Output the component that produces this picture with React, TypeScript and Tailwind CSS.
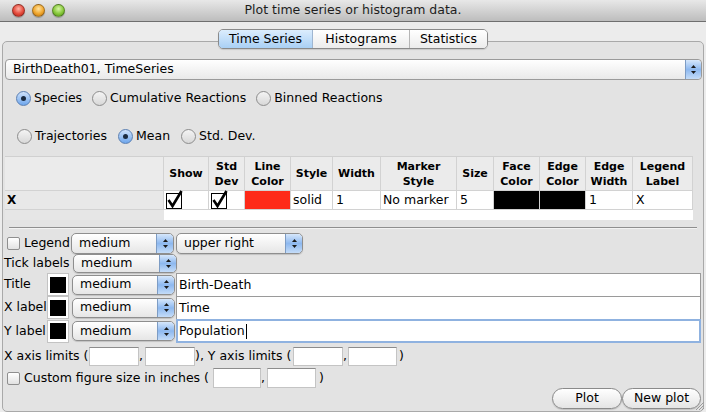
import React from "react";

const cols = [
  { h: "", w: 159 },
  { h: "Show", w: 45 },
  { h: "Std\nDev", w: 36 },
  { h: "Line\nColor", w: 46 },
  { h: "Style", w: 42 },
  { h: "Width", w: 48 },
  { h: "Marker\nStyle", w: 76 },
  { h: "Size", w: 37 },
  { h: "Face\nColor", w: 46 },
  { h: "Edge\nColor", w: 46 },
  { h: "Edge\nWidth", w: 47 },
  { h: "Legend\nLabel", w: 60 },
];

function Stepper({ w = 17 }: { w?: number }) {
  return (
    <div
      className="flex h-full items-center justify-center rounded-r-[4px] border-l border-[#7d9cc4] bg-linear-to-b from-[#d6e7fb] via-[#8db8ef] to-[#c4dcf8]"
      style={{ width: w }}
    >
      <svg width="7" height="11" viewBox="0 0 7 11">
        <path d="M3.5 1 L6 4 L1 4 Z" fill="#1a1a1a" />
        <path d="M3.5 10 L6 7 L1 7 Z" fill="#1a1a1a" />
      </svg>
    </div>
  );
}

function Popup({ label, w, h = 20 }: { label: string; w: number; h?: number }) {
  return (
    <div
      className="flex items-center overflow-hidden rounded-[5px] border border-[#8e8e8e] bg-linear-to-b from-white to-[#e6e6e6] shadow-[0_1px_1px_rgba(0,0,0,0.15)]"
      style={{ width: w, height: h }}
    >
      <span className="flex-1 pl-[7px] text-[12.5px] text-black">{label}</span>
      <Stepper />
    </div>
  );
}

function Radio({ on, label }: { on?: boolean; label: string }) {
  return (
    <div className="flex items-center gap-[3px]">
      <div
        className={
          on
            ? "flex h-[15px] w-[15px] items-center justify-center rounded-full border border-[#5a7fb3] bg-linear-to-b from-[#cfe2fa] to-[#6ea6ec]"
            : "h-[15px] w-[15px] rounded-full border border-[#8d8d8d] bg-linear-to-b from-[#f4f4f4] to-[#d8d8d8]"
        }
      >
        {on && <div className="h-[5px] w-[5px] rounded-full bg-[#1b2b40]" />}
      </div>
      <span className="text-[12.5px]">{label}</span>
    </div>
  );
}

function Check() {
  return (
    <svg width="17" height="17" viewBox="0 0 17 17" className="overflow-visible">
      <rect x="0.5" y="1.5" width="15" height="15" fill="white" stroke="black" />
      <path d="M2.5 8 L6.5 14 L15.5 -1" fill="none" stroke="black" strokeWidth="2.6" />
    </svg>
  );
}

function Box() {
  return (
    <div className="h-[13px] w-[13px] rounded-[2px] border border-[#8f8f8f] bg-linear-to-b from-white to-[#e2e2e2]" />
  );
}

function Swatch() {
  return (
    <div className="flex h-[23px] w-[22px] items-center justify-center border border-[#c3c3c3] bg-white">
      <div className="h-[16px] w-[16px] bg-black" />
    </div>
  );
}

function Field({ w, h = 19 }: { w: number; h?: number }) {
  return (
    <div
      className="border border-[#c4c4c4] border-t-[#8c8c8c] bg-white"
      style={{ width: w, height: h }}
    />
  );
}

function Light({ c }: { c: string }) {
  return (
    <div
      className="h-[13px] w-[13px] rounded-full border border-black/30 shadow-[0_1px_1px_rgba(0,0,0,0.25)]"
      style={{ background: c }}
    />
  );
}

export default function App() {
  return (
    <div className="relative h-[412px] w-[706px] overflow-hidden bg-[#ececec] font-['DejaVu_Sans',sans-serif] text-black">
      {/* title bar */}
      <div className="relative flex h-[22px] items-center justify-center border-b border-[#6f6f6f] bg-linear-to-b from-[#e8e8e8] to-[#bdbdbd]">
        <div className="absolute left-[12px] top-[4px] flex gap-[7px]">
          <Light c="radial-gradient(circle at 50% 35%, #ffb2a6, #e54a3c 55%, #a82419)" />
          <Light c="radial-gradient(circle at 50% 35%, #ffe3a0, #f0a62c 55%, #b06a0f)" />
          <Light c="radial-gradient(circle at 50% 35%, #d7f5a6, #86c83a 55%, #4d8a17)" />
        </div>
        <span className="text-[12.5px] text-[#1d1d1d]">Plot time series or histogram data.</span>
      </div>

      {/* tabs */}
      <div className="relative z-10 mt-[7px] flex h-[20px] justify-center">
        <div className="flex overflow-hidden rounded-[5px] border border-[#8a8a8a] text-[12.5px] shadow-[0_1px_1px_rgba(0,0,0,0.12)]">
          <div className="flex w-[94px] items-center justify-center border-r border-[#9fb6d1] bg-linear-to-b from-[#dcedfd] to-[#a9d0f5]">
            Time Series
          </div>
          <div className="flex w-[97px] items-center justify-center border-r border-[#b5b5b5] bg-linear-to-b from-white to-[#ececec]">
            Histograms
          </div>
          <div className="flex w-[77px] items-center justify-center bg-linear-to-b from-white to-[#ececec]">
            Statistics
          </div>
        </div>
      </div>

      {/* pane */}
      <div className="mx-[2px] -mt-[8px] h-[371px] rounded-[5px] border border-[#a9a9a9] bg-[#e3e3e3] pl-px pr-px">
        <div className="mt-[17px] flex h-[21px] items-center overflow-hidden rounded-[4px] border border-[#9a9a9a] bg-linear-to-b from-white to-[#e9e9e9] ml-px">
          <span className="flex-1 pl-[7px] text-[12.5px]">BirthDeath01, TimeSeries</span>
          <Stepper w={16} />
        </div>

        <div className="mt-[8px] flex h-[20px] items-center gap-[10px] pl-[12px]">
          <Radio on label="Species" />
          <Radio label="Cumulative Reactions" />
          <Radio label="Binned Reactions" />
        </div>
        <div className="mt-[18px] flex h-[20px] items-center gap-[11px] pl-[13px]">
          <Radio label="Trajectories" />
          <Radio on label="Mean" />
          <Radio label="Std. Dev." />
        </div>

        {/* table */}
        <div className="ml-px mt-[10px] w-[688px] border-t border-[#d0d0d0]">
          <div className="flex h-[34px] bg-[#ebebeb]">
            {cols.map((c, i) => (
              <div
                key={i}
                className="flex items-center justify-center whitespace-pre border-b border-r border-[#d2d2d2] text-center text-[11px] font-bold leading-[15px]"
                style={{ width: c.w }}
              >
                {c.h}
              </div>
            ))}
          </div>
          <div className="flex h-[19px] text-[12.5px]">
            <div className="flex w-[159px] items-center border-b border-r border-[#d2d2d2] bg-[#e8e8e8] pl-[2px] text-[12px] font-bold">
              X
            </div>
            <div className="flex w-[45px] items-center border-b border-r border-[#d2d2d2] bg-white pl-[2px]">
              <Check />
            </div>
            <div className="flex w-[36px] items-center border-b border-r border-[#d2d2d2] bg-white pl-[2px]">
              <Check />
            </div>
            <div className="w-[46px] border-b border-r border-[#d2d2d2] bg-[#fe2a19]" />
            <div className="flex w-[42px] items-center border-b border-r border-[#d2d2d2] bg-white pl-[2px]">solid</div>
            <div className="flex w-[48px] items-center border-b border-r border-[#d2d2d2] bg-white pl-[3px]">1</div>
            <div className="flex w-[76px] items-center border-b border-r border-[#d2d2d2] bg-white pl-[2px]">No marker</div>
            <div className="flex w-[37px] items-center border-b border-r border-[#d2d2d2] bg-white pl-[3px]">5</div>
            <div className="w-[46px] border-b border-r border-[#d2d2d2] bg-black" />
            <div className="w-[46px] border-b border-r border-[#d2d2d2] bg-black" />
            <div className="flex w-[47px] items-center border-b border-r border-[#d2d2d2] bg-white pl-[3px]">1</div>
            <div className="flex w-[60px] items-center border-b border-r border-[#d2d2d2] bg-white pl-[3px]">X</div>
          </div>
          <div className="flex h-[10px]">
            <div className="w-[159px] bg-[#e6e6e6]" />
            <div className="flex-1 bg-white" />
          </div>
        </div>

        <div className="ml-[5px] mr-[5px] mt-[7px] h-[2px] border-t border-b border-[#8e8e8e] border-b-[#f2f2f2]" />

        {/* legend row */}
        <div className="mt-[4px] flex h-[21px] items-center text-[12.5px]">
          <div className="ml-[3px]">
            <Box />
          </div>
          <span className="ml-[4px] w-[47px]">Legend</span>
          <Popup label="medium" w={103} h={21} />
          <div className="ml-[2px]">
            <Popup label="upper right" w={127} h={21} />
          </div>
        </div>
        <div className="flex h-[19px] items-center text-[12.5px]">
          <span className="w-[69px] whitespace-nowrap">Tick labels</span>
          <Popup label="medium" w={104} h={19} />
        </div>

        {["Title", "X label", "Y label"].map((t, i) => (
          <div key={t} className={i === 2 ? "flex h-[24px] items-center text-[12.5px]" : "flex h-[23px] items-center text-[12.5px]"}>
            <span className="w-[43px] whitespace-nowrap">{t}</span>
            <Swatch />
            <div className="ml-[3px]">
              <Popup label="medium" w={103} h={20} />
            </div>
            <div
              className={
                i === 2
                  ? "ml-px mr-px flex h-[24px] flex-1 items-center border-2 border-[#8fb2e0] bg-white pl-[1px]"
                  : "ml-px mr-px flex h-[23px] flex-1 items-center border border-b-0 border-[#9a9a9a] bg-white pl-[2px]"
              }
            >
              {["Birth-Death", "Time", "Population"][i]}
              {i === 2 && <span className="ml-px h-[15px] w-px bg-black" />}
            </div>
          </div>
        ))}

        <div className="mt-[4px] flex h-[19px] items-center text-[12.5px]">
          <span className="w-[85px] whitespace-nowrap">X axis limits (</span>
          <Field w={50} />
          <span className="w-[6px]">,</span>
          <Field w={50} />
          <span className="w-[98px] whitespace-nowrap">), Y axis limits (</span>
          <Field w={50} />
          <span className="w-[5px]">,</span>
          <Field w={49} />
          <span className="ml-[2px]">)</span>
        </div>

        <div className="mt-[2px] flex h-[20px] items-center text-[12.5px]">
          <div className="ml-[3px]">
            <Box />
          </div>
          <span className="ml-[4px] w-[189px] whitespace-nowrap">Custom figure size in inches (</span>
          <Field w={48} h={20} />
          <span className="w-[6px]">,</span>
          <Field w={49} h={20} />
          <span className="ml-[3px]">)</span>
        </div>

        <div className="flex h-[21px] justify-end pr-[1px] text-[12.5px]">
          <div className="flex w-[70px] items-center justify-center rounded-full border border-[#8a8a8a] bg-linear-to-b from-white to-[#e4e4e4] shadow-[0_1px_1px_rgba(0,0,0,0.15)]">
            Plot
          </div>
          <div className="flex w-[79px] items-center justify-center rounded-full border border-[#8a8a8a] bg-linear-to-b from-white to-[#e4e4e4] shadow-[0_1px_1px_rgba(0,0,0,0.15)]">
            New plot
          </div>
        </div>
      </div>

      {/* resize grip */}
      <svg className="absolute bottom-[1px] right-[1px]" width="11" height="11" viewBox="0 0 11 11">
        <path d="M10 2 L2 10 M10 5 L5 10 M10 8 L8 10" stroke="#9a9a9a" strokeWidth="1" />
      </svg>
    </div>
  );
}
